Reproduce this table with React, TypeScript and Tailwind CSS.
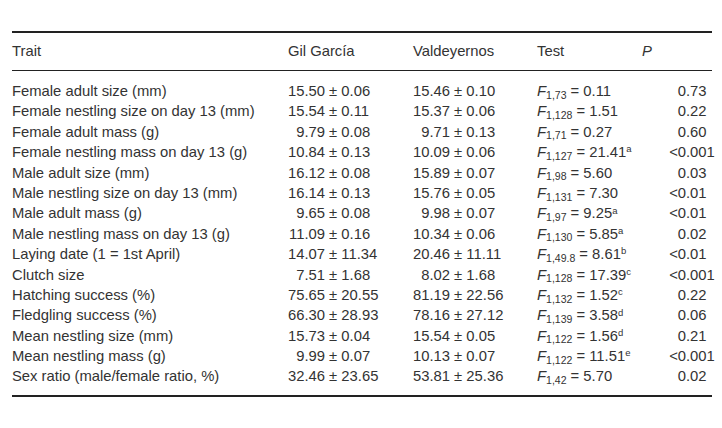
const rows = [
  { trait: "Female adult size (mm)", gil: ["15.50", "0.06"], val: ["15.46", "0.10"], df: "1,73", f: "0.11", sup: "", p: ["0", ".73"] },
  { trait: "Female nestling size on day 13 (mm)", gil: ["15.54", "0.11"], val: ["15.37", "0.06"], df: "1,128", f: "1.51", sup: "", p: ["0", ".22"] },
  { trait: "Female adult mass (g)", gil: ["9.79", "0.08"], val: ["9.71", "0.13"], df: "1,71", f: "0.27", sup: "", p: ["0", ".60"] },
  { trait: "Female nestling mass on day 13 (g)", gil: ["10.84", "0.13"], val: ["10.09", "0.06"], df: "1,127", f: "21.41", sup: "a", p: ["<0", ".001"] },
  { trait: "Male adult size (mm)", gil: ["16.12", "0.08"], val: ["15.89", "0.07"], df: "1,98", f: "5.60", sup: "", p: ["0", ".03"] },
  { trait: "Male nestling size on day 13 (mm)", gil: ["16.14", "0.13"], val: ["15.76", "0.05"], df: "1,131", f: "7.30", sup: "", p: ["<0", ".01"] },
  { trait: "Male adult mass (g)", gil: ["9.65", "0.08"], val: ["9.98", "0.07"], df: "1,97", f: "9.25", sup: "a", p: ["<0", ".01"] },
  { trait: "Male nestling mass on day 13 (g)", gil: ["11.09", "0.16"], val: ["10.34", "0.06"], df: "1,130", f: "5.85", sup: "a", p: ["0", ".02"] },
  { trait: "Laying date (1 = 1st April)", gil: ["14.07", "11.34"], val: ["20.46", "11.11"], df: "1,49.8", f: "8.61", sup: "b", p: ["<0", ".01"] },
  { trait: "Clutch size", gil: ["7.51", "1.68"], val: ["8.02", "1.68"], df: "1,128", f: "17.39", sup: "c", p: ["<0", ".001"] },
  { trait: "Hatching success (%)", gil: ["75.65", "20.55"], val: ["81.19", "22.56"], df: "1,132", f: "1.52", sup: "c", p: ["0", ".22"] },
  { trait: "Fledgling success (%)", gil: ["66.30", "28.93"], val: ["78.16", "27.12"], df: "1,139", f: "3.58", sup: "d", p: ["0", ".06"] },
  { trait: "Mean nestling size (mm)", gil: ["15.73", "0.04"], val: ["15.54", "0.05"], df: "1,122", f: "1.56", sup: "d", p: ["0", ".21"] },
  { trait: "Mean nestling mass (g)", gil: ["9.99", "0.07"], val: ["10.13", "0.07"], df: "1,122", f: "11.51", sup: "e", p: ["<0", ".001"] },
  { trait: "Sex ratio (male/female ratio, %)", gil: ["32.46", "23.65"], val: ["53.81", "25.36"], df: "1,42", f: "5.70", sup: "", p: ["0", ".02"] },
]

// mean ± sd, lined up on the ± sign
function MeanSd({ v }: { v: string[] }) {
  return (
    <div className="flex">
      <span className="w-[37px] text-right">{v[0]}</span>
      <span className="whitespace-pre">{" ± " + v[1]}</span>
    </div>
  )
}

export default function App() {
  return (
    <div className="bg-white w-[722px] h-[428px] pt-[31px] pl-[12px] text-[14.8px] text-[#333] font-['Liberation_Sans',Arial,sans-serif]">
      <div className="w-[700px] border-t-2 border-b-2 border-[#222]">
        <div className="grid grid-cols-[276px_125px_124px_105px_1fr] h-[38px] items-center border-b border-[#222]">
          <div>Trait</div>
          <div>Gil García</div>
          <div>Valdeyernos</div>
          <div>Test</div>
          <div className="italic">P</div>
        </div>
        <div className="pt-[9px] pb-[9px]">
          {rows.map((r) => (
            <div key={r.trait} className="grid grid-cols-[276px_125px_124px_105px_1fr] h-[20.4px] items-center">
              <div className="whitespace-nowrap">{r.trait}</div>
              <MeanSd v={r.gil} />
              <MeanSd v={r.val} />
              <div className="whitespace-nowrap">
                <span className="italic">F</span>
                <sub className="text-[10.5px]">{r.df}</sub>
                {" = " + r.f}
                {r.sup && <sup className="text-[9.5px]">{r.sup}</sup>}
              </div>
              <div className="flex">
                <span className="w-[44px] text-right">{r.p[0]}</span>
                <span>{r.p[1]}</span>
              </div>
            </div>
          ))}
        </div>
      </div>
    </div>
  )
}
